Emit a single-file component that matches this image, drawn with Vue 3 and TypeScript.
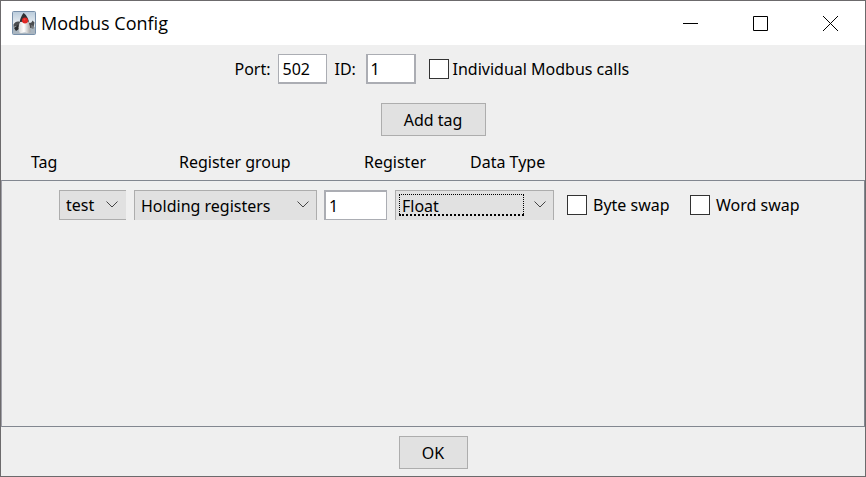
<script setup lang="ts">
import { ref } from 'vue'

interface TagRow {
  tag: string
  group: string
  register: string
  type: string
  byteSwap: boolean
  wordSwap: boolean
}

const port = ref('502')
const unitId = ref('1')
const individual = ref(false)
const tags = ['test']
const groups = ['Holding registers', 'Input registers', 'Coils', 'Discrete inputs']
const types = ['Float', 'Int16', 'Int32', 'Double']

const newRow = (): TagRow => ({
  tag: 'test',
  group: 'Holding registers',
  register: '1',
  type: 'Float',
  byteSwap: false,
  wordSwap: false,
})
const rows = ref<TagRow[]>([newRow()])
</script>

<template>
  <main class="window">
    <header class="titlebar">
      <svg class="logo" viewBox="0 0 24 24" aria-hidden="true">
        <defs>
          <linearGradient id="sky" x1="0" y1="0" x2="0" y2="1">
            <stop offset="0" stop-color="#b9cbdb" />
            <stop offset="0.5" stop-color="#e6ecf1" />
            <stop offset="1" stop-color="#b9c8d6" />
          </linearGradient>
          <linearGradient id="belly" x1="0" y1="0" x2="1" y2="0">
            <stop offset="0" stop-color="#d5d5d5" />
            <stop offset="0.45" stop-color="#ffffff" />
            <stop offset="1" stop-color="#a4a4a4" />
          </linearGradient>
        </defs>
        <rect x="0.5" y="0.5" width="23" height="23" rx="1" fill="url(#sky)" stroke="#7890aa" />
        <path d="M1 16h22v7H1z" fill="#a9b5bf" />
        <path d="M8 11C5 10 3 11 1.500 13.500L1.500 16L5 15L7 16.500z" fill="#4b4d50" />
        <path d="M16 11c2.500 1.500 3.500 1 4.500-1.500l2 2l-1 5l-3.500.500z" fill="#4b4d50" />
        <path d="M2 17l4-3l1 4l-3 2z" fill="#292a2c" />
        <path d="M19 14l2.500 1v3l-2-.500z" fill="#77797c" />
        <path d="M11.500 2C13.500 3 16 6.500 17 11L7.500 12C8 8 9.500 4.500 11.500 2z" fill="#303134" />
        <path d="M8 11C6.500 15 6 19 7.500 21.500c1.500 1.500 4-.500 6 0c2 1 4 .500 5-.500C18.500 17 17.500 14 16.500 10.500z" fill="url(#belly)" />
        <circle cx="13" cy="9.500" r="3" fill="#e02522" />
        <circle cx="12.500" cy="8.500" r="1" fill="#ee4a43" />
      </svg>
      <h1 class="title">Modbus Config</h1>
      <nav class="controls" aria-label="Window">
        <button class="control" type="button" aria-label="Minimize">
          <svg viewBox="0 0 15 15"><path d="M0 7.500h15" /></svg>
        </button>
        <button class="control" type="button" aria-label="Maximize">
          <svg viewBox="0 0 15 15"><path d="M.500.500h14v14H.500z" /></svg>
        </button>
        <button class="control" type="button" aria-label="Close">
          <svg viewBox="0 0 15 15"><path d="M0 0l15 15M15 0L0 15" /></svg>
        </button>
      </nav>
    </header>

    <section class="settings">
      <label class="port-label" for="port">Port:</label>
      <input id="port" v-model="port" class="field port" type="text" />
      <label class="id-label" for="unit">ID:</label>
      <input id="unit" v-model="unitId" class="field unit" type="text" />
      <label class="check"><input v-model="individual" type="checkbox" />Individual Modbus calls</label>
    </section>

    <div class="add"><button class="push" type="button" @click="rows.push(newRow())">Add tag</button></div>

    <div class="headings">
      <span>Tag</span><span>Register group</span><span>Register</span><span>Data Type</span>
    </div>

    <section class="list">
      <div v-for="(row, i) in rows" :key="i" class="row">
        <span class="combo tag">
          <select v-model="row.tag" aria-label="Tag"><option v-for="t in tags" :key="t">{{ t }}</option></select>
          <svg class="chevron" viewBox="0 0 12 7"><path d="M.500.500L6 6L11.500.500" /></svg>
        </span>
        <span class="combo group">
          <select v-model="row.group" aria-label="Register group"><option v-for="g in groups" :key="g">{{ g }}</option></select>
          <svg class="chevron" viewBox="0 0 12 7"><path d="M.500.500L6 6L11.500.500" /></svg>
        </span>
        <input v-model="row.register" class="field register" type="text" aria-label="Register" />
        <span class="combo type">
          <select v-model="row.type" aria-label="Data Type"><option v-for="t in types" :key="t">{{ t }}</option></select>
          <span class="focus"></span>
          <svg class="chevron" viewBox="0 0 12 7"><path d="M.500.500L6 6L11.500.500" /></svg>
        </span>
        <label class="check byte"><input v-model="row.byteSwap" type="checkbox" />Byte swap</label>
        <label class="check word"><input v-model="row.wordSwap" type="checkbox" />Word swap</label>
      </div>
    </section>

    <footer class="footer"><button class="push ok" type="button">OK</button></footer>
  </main>
</template>

<style>
body {
  background: #efefef;
}
</style>

<style scoped>
.window {
  box-sizing: border-box;
  min-height: 100vh;
  display: flex;
  flex-direction: column;
  border: 1px solid #6c6a6c;
  background: #efefef;
  color: #000;
  font: 16px/20px "Noto Sans", sans-serif;
}
input,
select,
button {
  box-sizing: border-box;
  margin: 0;
  font: inherit;
  color: inherit;
  border-radius: 0;
}
.titlebar {
  display: flex;
  align-items: center;
  height: 44px;
  padding-left: 11px;
  background: #fff;
}
.logo {
  width: 24px;
  height: 24px;
}
.title {
  flex: 1;
  margin: 0 0 0 5px;
  font: 18px/24px "Open Sans", sans-serif;
}
.controls {
  display: flex;
}
.control {
  width: 70px;
  height: 44px;
  padding: 0;
  border: 0;
  background: none;
}
.control svg {
  display: block;
  width: 15px;
  height: 15px;
  margin: 0 auto;
  fill: none;
  stroke: #000;
}
.settings {
  display: flex;
  justify-content: center;
  align-items: center;
  padding: 9px 6px 0 0;
}
.port-label {
  width: 43px;
}
.id-label {
  width: 31px;
  margin-left: 8px;
}
.field {
  height: 30px;
  padding: 0 3px;
  border: 2px solid #abadb3;
  background: #fff;
  outline: 0;
}
.port {
  width: 49px;
  padding: 0 4px;
  border-width: 1px 1px 2px;
}
.unit {
  width: 50px;
  border-top-width: 1px;
}
.check {
  display: flex;
  align-items: center;
  gap: 6px;
  white-space: nowrap;
}
.check input {
  appearance: none;
  flex: none;
  width: 20px;
  height: 20px;
  border: 1px solid #333;
  background: #fff;
}
.check input:checked {
  background: #333;
}
.settings .check {
  gap: 4px;
  width: 197px;
  margin-left: 13px;
}
.add,
.footer {
  display: flex;
  justify-content: center;
}
.add {
  padding-top: 19px;
}
.push {
  width: 105px;
  height: 33px;
  padding: 0;
  border: 1px solid #adadad;
  background: #e1e1e1;
}
.headings {
  display: grid;
  grid-template-columns: 148px 185px 106px auto;
  padding: 16px 0 8px 30px;
}
.list {
  flex: 1;
  border: 1px solid #828790;
  border-left-color: #a0a0a8;
}
.row {
  display: flex;
  justify-content: center;
  padding: 9px 8px 0 0;
}
.row + .row {
  padding-top: 8px;
}
.combo {
  position: relative;
  display: flex;
  height: 30px;
}
.combo select {
  appearance: none;
  width: 100%;
  padding: 0 24px 0 6px;
  border: 1px solid #adadad;
  background: #e1e1e1;
  outline: 0;
}
.chevron {
  position: absolute;
  right: 8px;
  top: 11px;
  width: 12px;
  height: 7px;
  fill: none;
  stroke: #444;
  pointer-events: none;
}
.tag {
  width: 67px;
}
.tag select {
  border-right: 0;
}
.group {
  width: 183px;
  margin-left: 8px;
}
.group select,
.type select {
  border-bottom: 0;
}
.register {
  width: 63px;
  margin-left: 7px;
  border-width: 2px 1px 1px 2px;
}
.type {
  width: 159px;
  margin-left: 8px;
}
.focus {
  position: absolute;
  inset: 4px 30px 4px 4px;
  border: 1px dotted #000;
  border-bottom-width: 2px;
  pointer-events: none;
}
.byte {
  width: 104px;
  margin-left: 13px;
}
.word {
  width: 109px;
  margin-left: 19px;
}
.footer {
  padding: 9px 0 7px;
}
.ok {
  width: 69px;
}
</style>
